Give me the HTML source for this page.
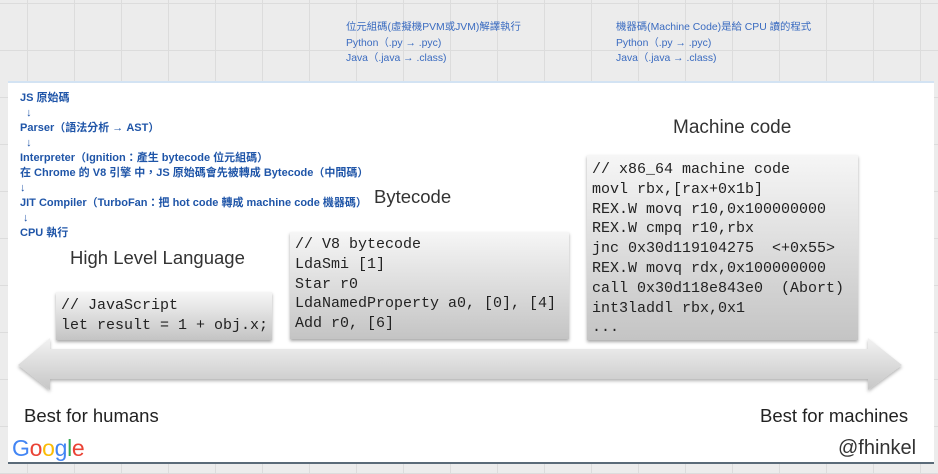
<!DOCTYPE html>
<html><head><meta charset="utf-8"><style>
*{margin:0;padding:0;box-sizing:border-box}
body{width:938px;height:474px;overflow:hidden;position:relative;font-family:"Liberation Sans","Noto Sans CJK TC",sans-serif;
background-color:#ececec;
background-image:linear-gradient(to right,#dcdcdc 1px,transparent 1px),linear-gradient(to bottom,#dcdcdc 1px,transparent 1px);
background-size:47px 47px;background-position:-20px 3px}
.a{position:absolute;white-space:nowrap}
.slide{position:absolute;left:8px;top:81px;width:926px;height:383px;background:#fff;border-top:2px solid #d3e3f3;border-bottom:2px solid #5a6a78}
.top{color:#3a6bc0;font-size:10.4px;line-height:15.5px}
.flow{color:#1f55a8;font-size:11px;font-weight:bold;line-height:15px}
.box{position:absolute;background:linear-gradient(#f6f6f6,#c4c4c4);box-shadow:0 2px 3px rgba(0,0,0,.35);font-family:"Liberation Mono",monospace;font-size:15px;line-height:19.8px;color:#222;padding:4px 5px;white-space:pre}
.lbl{font-size:18.5px;color:#333}
</style></head><body>
<div class="a top" style="left:346px;top:20px">位元組碼(虛擬機PVM或JVM)解譯執行<br>Python（.py → .pyc)<br>Java（.java → .class)</div>
<div class="a top" style="left:616px;top:20px">機器碼(Machine Code)是給 CPU 讀的程式<br>Python（.py → .pyc)<br>Java（.java → .class)</div>
<div class="slide"></div>
<div class="a flow" style="left:20px;top:91px">JS 原始碼<br>&nbsp;&nbsp;↓<br>Parser（語法分析 → AST）<br>&nbsp;&nbsp;↓<br>Interpreter（Ignition：產生 bytecode 位元組碼）<br>在 Chrome 的 V8 引擎 中，JS 原始碼會先被轉成 Bytecode（中間碼）<br>↓<br>JIT Compiler（TurboFan：把 hot code 轉成 machine code 機器碼）<br>&nbsp;↓<br>CPU 執行</div>
<div class="a lbl" style="left:673px;top:117px;font-size:19px">Machine code</div>
<div class="a lbl" style="left:374px;top:186px">Bytecode</div>
<div class="a lbl" style="left:70px;top:247px">High Level Language</div>
<div class="box" style="left:56px;top:292px;width:216px;height:48px;padding-top:4px">// JavaScript
let result = 1 + obj.x;</div>
<div class="box" style="left:290px;top:232px;width:279px;height:107px;padding-top:3px">// V8 bytecode
LdaSmi [1]
Star r0
LdaNamedProperty a0, [0], [4]
Add r0, [6]</div>
<div class="box" style="left:587px;top:155px;width:271px;height:185px;padding-top:5px">// x86_64 machine code
movl rbx,[rax+0x1b]
REX.W movq r10,0x100000000
REX.W cmpq r10,rbx
jnc 0x30d119104275  &lt;+0x55&gt;
REX.W movq rdx,0x100000000
call 0x30d118e843e0  (Abort)
int3laddl rbx,0x1
...</div>
<svg class="a" style="left:0;top:332px" width="938" height="64"><defs><linearGradient id="g" x1="0" y1="0" x2="0" y2="1"><stop offset="0" stop-color="#f2f2f2"/><stop offset="1" stop-color="#c6c6c6"/></linearGradient>
<filter id="s"><feDropShadow dx="0" dy="2" stdDeviation="1.5" flood-opacity=".3"/></filter></defs>
<path d="M50,6 L50,17 L868,17 L868,6 L902,33 L868,58 L868,47 L50,47 L50,58 L18,33 Z" fill="url(#g)" filter="url(#s)"/></svg>
<div class="a lbl" style="left:24px;top:405px;color:#222">Best for humans</div>
<div class="a lbl" style="left:760px;top:405px;color:#222">Best for machines</div>
<div class="a" style="left:12px;top:435px;font-size:23px;letter-spacing:-0.3px"><span style="color:#4285f4">G</span><span style="color:#ea4335">o</span><span style="color:#fbbc05">o</span><span style="color:#4285f4">g</span><span style="color:#34a853">l</span><span style="color:#ea4335">e</span></div>
<div class="a" style="left:838px;top:437px;font-size:20px;color:#333">@fhinkel</div>
</body></html>
